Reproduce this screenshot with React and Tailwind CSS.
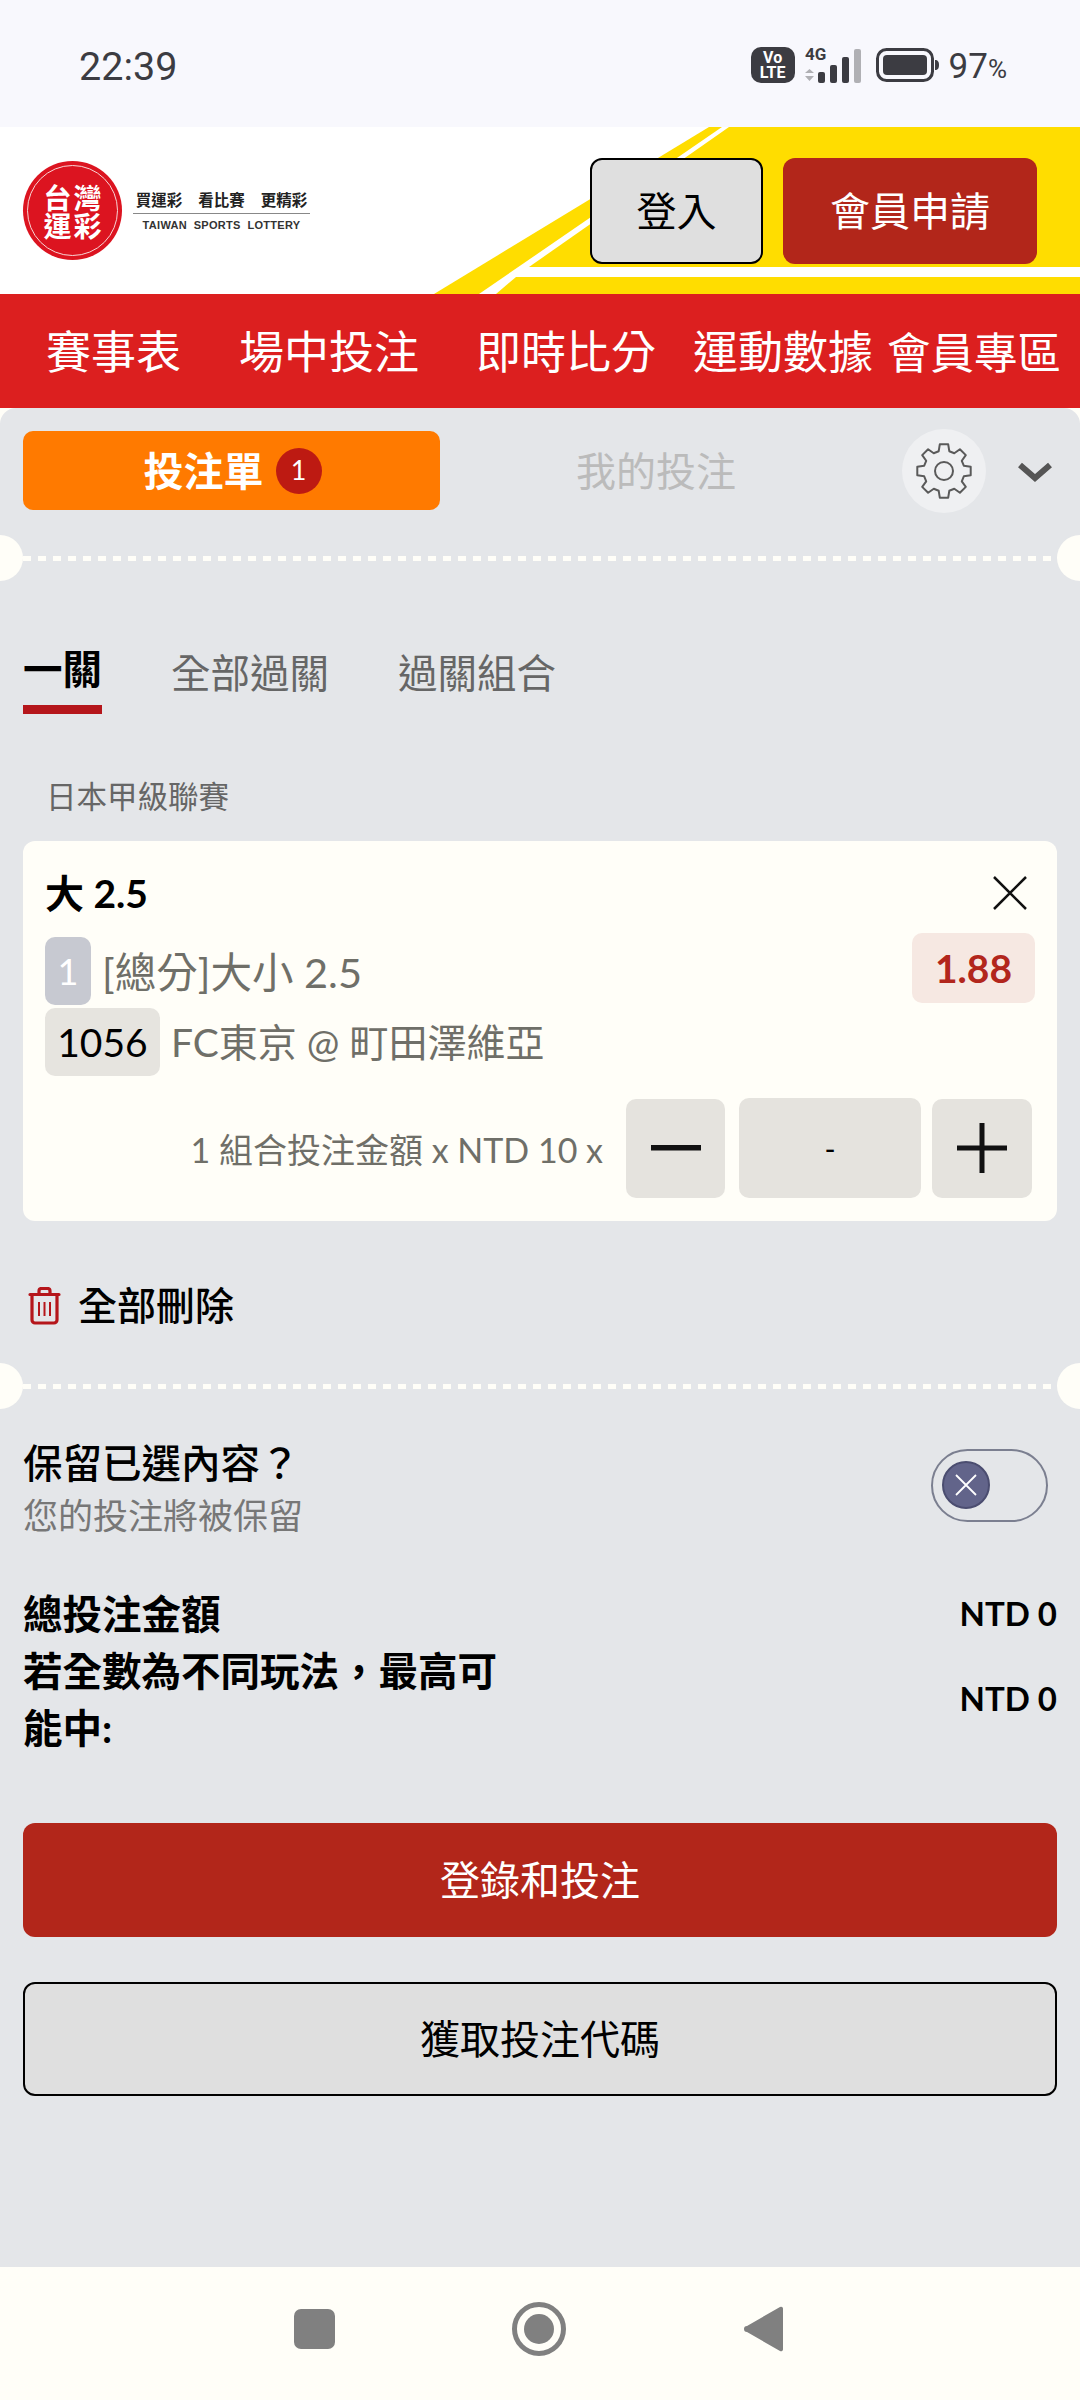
import React from "react";

const cjk = "font-['Lato','Noto_Sans_CJK_TC',sans-serif]";

// 8 tooth outline, worked out once from the angles
const gearPath = () => {
  const pts = [];
  for (let i = 0; i < 8; i++) {
    const a = (i * 45 - 90) * (Math.PI / 180);
    const d = Math.PI / 180;
    [[20.5, -15], [27, -9], [27, 9], [20.5, 15]].forEach(([r, o]) => {
      pts.push(`${(30 + r * Math.cos(a + o * d)).toFixed(1)} ${(30 + r * Math.sin(a + o * d)).toFixed(1)}`);
    });
  }
  return "M" + pts.join("L") + "Z";
};

const Ticketline = () => (
  <div className="relative h-[46px] w-full flex items-center">
    <div className="absolute left-0 top-0 h-[46px] w-[23px] rounded-r-full bg-[#fffef8]" />
    <div className="absolute right-0 top-0 h-[46px] w-[23px] rounded-l-full bg-[#fffef8]" />
    <div className="mx-[23px] h-[5px] flex-1 bg-[repeating-linear-gradient(90deg,#fffef8_0,#fffef8_8px,transparent_8px,transparent_15px)]" />
  </div>
);

const StatusBar = () => (
  <div className="h-[127px] bg-[#f8f8fd] flex items-center justify-between pl-[79px] pr-[73px] text-[#3c3c42] font-['Roboto',sans-serif]">
    <span className="text-[39.5px] leading-none mt-[6px]">22:39</span>
    <div className="flex items-center mt-[3px]">
      <div className="w-[44px] h-[36px] rounded-[10px] bg-[#3c3c42] text-white text-[16px] font-bold leading-[15px] flex flex-col items-center justify-center">
        <span>Vo</span>
        <span>LTE</span>
      </div>
      <svg width="56" height="38" viewBox="0 0 56 38" className="ml-[10px] overflow-visible" fill="#3c3c42">
        <text x="0" y="14" fontSize="17" fontWeight="700" fontFamily="Roboto">4G</text>
        <path d="M0 27l4.500-4 4.500 4zM0 30h9l-4.500 5z" fill="#b0b0b4" />
        <rect x="13" y="26" width="7" height="11" rx="2" />
        <rect x="25" y="19" width="7" height="18" rx="2" />
        <rect x="37" y="11" width="7" height="26" rx="2" />
        <rect x="49" y="3" width="7" height="34" rx="2" fill="#b0b0b4" />
      </svg>
      <svg width="64" height="34" viewBox="0 0 64 34" className="ml-[15px]">
        <rect x="1.5" y="1.5" width="55" height="31" rx="9" fill="none" stroke="#3c3c42" strokeWidth="3" />
        <rect x="7" y="7" width="44" height="20" rx="4" fill="#3c3c42" />
        <path d="M59 12c3 0 4 2 4 5s-1 5-4 5z" fill="#3c3c42" />
      </svg>
      <span className="ml-[9px] text-[35px] leading-none mt-[3px]">97<span className="text-[26px]">%</span></span>
    </div>
  </div>
);

const Logo = () => (
  <div className="flex items-center">
    <div className="w-[99px] h-[99px] rounded-full bg-[#dc1420] flex items-center justify-center">
      <div className="w-[91px] h-[91px] rounded-full border-[1.5px] border-[#f8d5d5] grid grid-cols-[30px_30px] content-center justify-center justify-items-center text-white font-['Noto_Sans_CJK_TC',sans-serif] font-bold text-[28px] leading-[28px]">
        <span>台</span>
        <span>灣</span>
        <span>運</span>
        <span>彩</span>
      </div>
    </div>
    <div className="ml-[11px] w-[177px] flex flex-col items-center font-['Noto_Sans_CJK_TC',sans-serif]">
      <div className="flex gap-[16px] text-[15.5px] leading-[18px] font-bold text-[#222]">
        <span>買運彩</span>
        <span>看比賽</span>
        <span>更精彩</span>
      </div>
      <div className="w-full h-[1px] bg-[#888] mt-[5px]" />
      <div className="mt-[4px] text-[11px] leading-[14px] font-bold tracking-[0.3px] text-[#333] font-['Liberation_Sans',sans-serif] whitespace-pre">
        TAIWAN  SPORTS  LOTTERY
      </div>
    </div>
  </div>
);

const Header = () => (
  <div className="relative h-[167px] bg-white flex items-center justify-between pl-[23px] pr-[43px]">
    <svg className="absolute inset-0" width="1080" height="167" viewBox="0 0 1080 167" fill="#ffdd00">
      <path d="M729 0H1080V140H529Z" />
      <path d="M709 0H722L479 167H434Z" />
      <path d="M516 150H1080V167H496Z" />
    </svg>
    <div className="relative"><Logo /></div>
    <div className={`relative flex gap-[20px] text-[40px] ${cjk}`}>
      <div className="w-[173px] h-[106px] rounded-[12px] border-2 border-black bg-[#dfdfdf] text-black flex items-center justify-center">登入</div>
      <div className="w-[254px] h-[106px] rounded-[12px] bg-[#b2261a] text-white flex items-center justify-center">會員申請</div>
    </div>
  </div>
);

const Nav = () => (
  <div className={`h-[114px] bg-[#dc1f1f] flex items-center pl-[46px] pt-[3px] text-white text-[45px] leading-none ${cjk}`}>
    <span className="w-[193px]">賽事表</span>
    <span className="w-[237px]">場中投注</span>
    <span className="w-[217px]">即時比分</span>
    <span className="w-[194px]">運動數據</span>
    <span className="text-[43.5px]">會員專區</span>
  </div>
);

const Label = ({ children, className }) => (
  <div className={`flex items-center justify-center rounded-[10px] ${className}`}>{children}</div>
);

const BetCard = () => (
  <div className="mx-[23px] mt-[27px] h-[380px] rounded-[12px] bg-[#fffef8] pl-[22px] pr-[25px] pt-[32px]">
    <div className="flex items-center justify-between h-[40px]">
      <span className="text-[39px] leading-none font-bold text-black">大 2.5</span>
      <svg width="36" height="36" viewBox="0 0 36 36" fill="none" stroke="#111" strokeWidth="2.5" className="mr-[4px]">
        <path d="M2 2L34 34M34 2L2 34" />
      </svg>
    </div>
    <div className="flex justify-between mt-[24px] h-[68px]">
      <div className="flex items-center">
        <Label className="w-[46px] h-[68px] bg-[#c7c9d1] text-white text-[36px]">1</Label>
        <span className="ml-[11px] text-[41.5px] text-[#6f6f68] mt-[2px]">[總分]大小 2.5</span>
      </div>
      <Label className="w-[123px] h-[70px] mt-[-4px] mr-[-3px] bg-[#f6e8e2] text-[#b2261c] text-[39px] font-bold">1.88</Label>
    </div>
    <div className="flex items-center mt-[3px] h-[68px]">
      <Label className="w-[115px] h-[68px] bg-[#e6e4df] text-black text-[39px]">1056</Label>
      <span className="ml-[11px] text-[39px] text-[#6f6f68]">FC東京 @ 町田澤維亞</span>
    </div>
    <div className="flex items-center justify-end mt-[22px]">
      <span className="text-[34px] text-[#6f6f68] mr-[23px] mt-[2px]">1 組合投注金額 x NTD 10 x</span>
      <Label className="w-[99px] h-[99px] bg-[#e5e3de]">
        <svg width="50" height="6" viewBox="0 0 50 6"><rect width="50" height="5.500" fill="#111" /></svg>
      </Label>
      <Label className="w-[182px] h-[100px] ml-[14px] bg-[#e5e3de] text-[30px] text-black">-</Label>
      <Label className="w-[100px] h-[99px] ml-[11px] bg-[#e5e3de]">
        <svg width="50" height="50" viewBox="0 0 50 50" fill="#111">
          <rect y="22.500" width="50" height="5" />
          <rect x="22.500" width="5" height="50" />
        </svg>
      </Label>
    </div>
  </div>
);

const Panel = () => (
  <div className="h-[1859px] bg-[#fffef8]">
    <div className={`h-full rounded-t-[16px] bg-[#e4e6e9] pt-[23px] ${cjk}`}>
      <div className="flex items-center h-[79px] pl-[23px]">
        <div className="w-[417px] h-[79px] rounded-[10px] bg-[#ff7a00] text-white flex items-center justify-center gap-[12px] pl-[2px]">
          <span className="text-[40px] font-bold mt-[1px]">投注單</span>
          <span className="w-[46px] h-[46px] rounded-full bg-[#bd1a12] flex items-center justify-center text-[27px]">1</span>
        </div>
        <span className="ml-[136px] mt-[1px] text-[40px] text-[#bbbbbb]">我的投注</span>
        <div className="ml-[166px] w-[84px] h-[84px] rounded-full bg-[#eff0f2] flex items-center justify-center">
          <svg width="60" height="60" viewBox="0 0 60 60" fill="none" stroke="#5a5a5a" strokeWidth="2" strokeLinejoin="round">
            <path d={gearPath()} />
            <circle cx="30" cy="30" r="9" />
          </svg>
        </div>
        <svg width="34" height="20" viewBox="0 0 34 20" fill="none" stroke="#555" strokeWidth="6" className="ml-[32px] mt-[2px]">
          <path d="M2 3L17 16L32 3" />
        </svg>
      </div>
      <div className="mt-[25px]"><Ticketline /></div>
      <div className="flex mt-[68px] pl-[23px] text-[39.5px] leading-none">
        <div className="w-[79px]">
          <div className="font-bold text-black h-[40px] whitespace-nowrap">一關</div>
          <div className="h-[9px] bg-[#b5161b] mt-[16px]" />
        </div>
        <span className="ml-[69px] mt-[4px] text-[#666]">全部過關</span>
        <span className="ml-[69px] mt-[4px] text-[#666]">過關組合</span>
      </div>
      <div className="mt-[64px] pl-[46px] text-[30.5px] leading-[36px] text-[#666]">日本甲級聯賽</div>
      <BetCard />
      <div className="flex items-center mt-[65px] pl-[28px]">
        <svg width="33" height="38" viewBox="0 0 33 38" fill="none" stroke="#b5161b" strokeWidth="3.200" strokeLinecap="round" strokeLinejoin="round">
          <path d="M2 7.500h29M11 7V4a2.500 2.500 0 0 1 2.500-2.500h6A2.500 2.500 0 0 1 22 4v3" />
          <path d="M4 8v25a3 3 0 0 0 3 3h19a3 3 0 0 0 3-3V8" />
          <path d="M11 15v14M16.500 15v14M22 15v14" strokeWidth="2" strokeLinecap="butt" />
        </svg>
        <span className="ml-[17px] text-[39px] leading-none text-black font-medium">全部刪除</span>
      </div>
      <div className="mt-[38px]"><Ticketline /></div>
      <div className="flex items-center justify-between mt-[28px] pl-[23px] pr-[32px]">
        <div>
          <div className="text-[39.5px] leading-[52px] text-black font-medium">保留已選內容？</div>
          <div className="text-[35px] leading-[52px] text-[#777]">您的投注將被保留</div>
        </div>
        <div className="w-[117px] h-[73px] mb-[8px] rounded-full border-2 border-[#7b7f90] flex items-center pl-[9px]">
          <div className="w-[48px] h-[48px] rounded-full bg-[#62648a] border-2 border-[#4b4d70] flex items-center justify-center">
            <svg width="24" height="24" viewBox="0 0 24 24" fill="none" stroke="#fff" strokeWidth="1.800">
              <path d="M2 2L22 22M22 2L2 22" />
            </svg>
          </div>
        </div>
      </div>
      <div className="flex justify-between mt-[44px] px-[23px]">
        <div className="w-[500px] text-[39.5px] leading-[57px] font-bold text-black">
          <div>總投注金額</div>
          <div>若全數為不同玩法，最高可能中:</div>
        </div>
        <div className="text-[33px] leading-[57px] font-bold text-black text-right">
          <div>NTD 0</div>
          <div className="mt-[28px]">NTD 0</div>
        </div>
      </div>
      <div className="mx-[23px] mt-[67px] h-[114px] rounded-[12px] bg-[#b2261a] text-white text-[40px] flex items-center justify-center">登錄和投注</div>
      <div className="mx-[23px] mt-[45px] h-[114px] rounded-[12px] border-2 border-black bg-[#dfdfdf] text-black text-[40px] flex items-center justify-center">獲取投注代碼</div>
    </div>
  </div>
);

const BottomBar = () => (
  <div className="h-[133px] bg-[#fffef8] flex items-center">
    <svg width="1080" height="133" viewBox="0 0 1080 133" fill="#808080">
      <rect x="294" y="42" width="41" height="40" rx="7" />
      <circle cx="539" cy="62" r="24.500" fill="none" stroke="#808080" strokeWidth="5" />
      <circle cx="539" cy="62" r="15" />
      <path d="M780 40a2 2 0 0 1 3 2v40a2 2 0 0 1-3 2L747 65a3 3 0 0 1 0-6z" />
    </svg>
  </div>
);

export default function App() {
  return (
    <div className="w-[1080px] h-[2400px] overflow-hidden flex flex-col">
      <StatusBar />
      <Header />
      <Nav />
      <Panel />
      <BottomBar />
    </div>
  );
}
